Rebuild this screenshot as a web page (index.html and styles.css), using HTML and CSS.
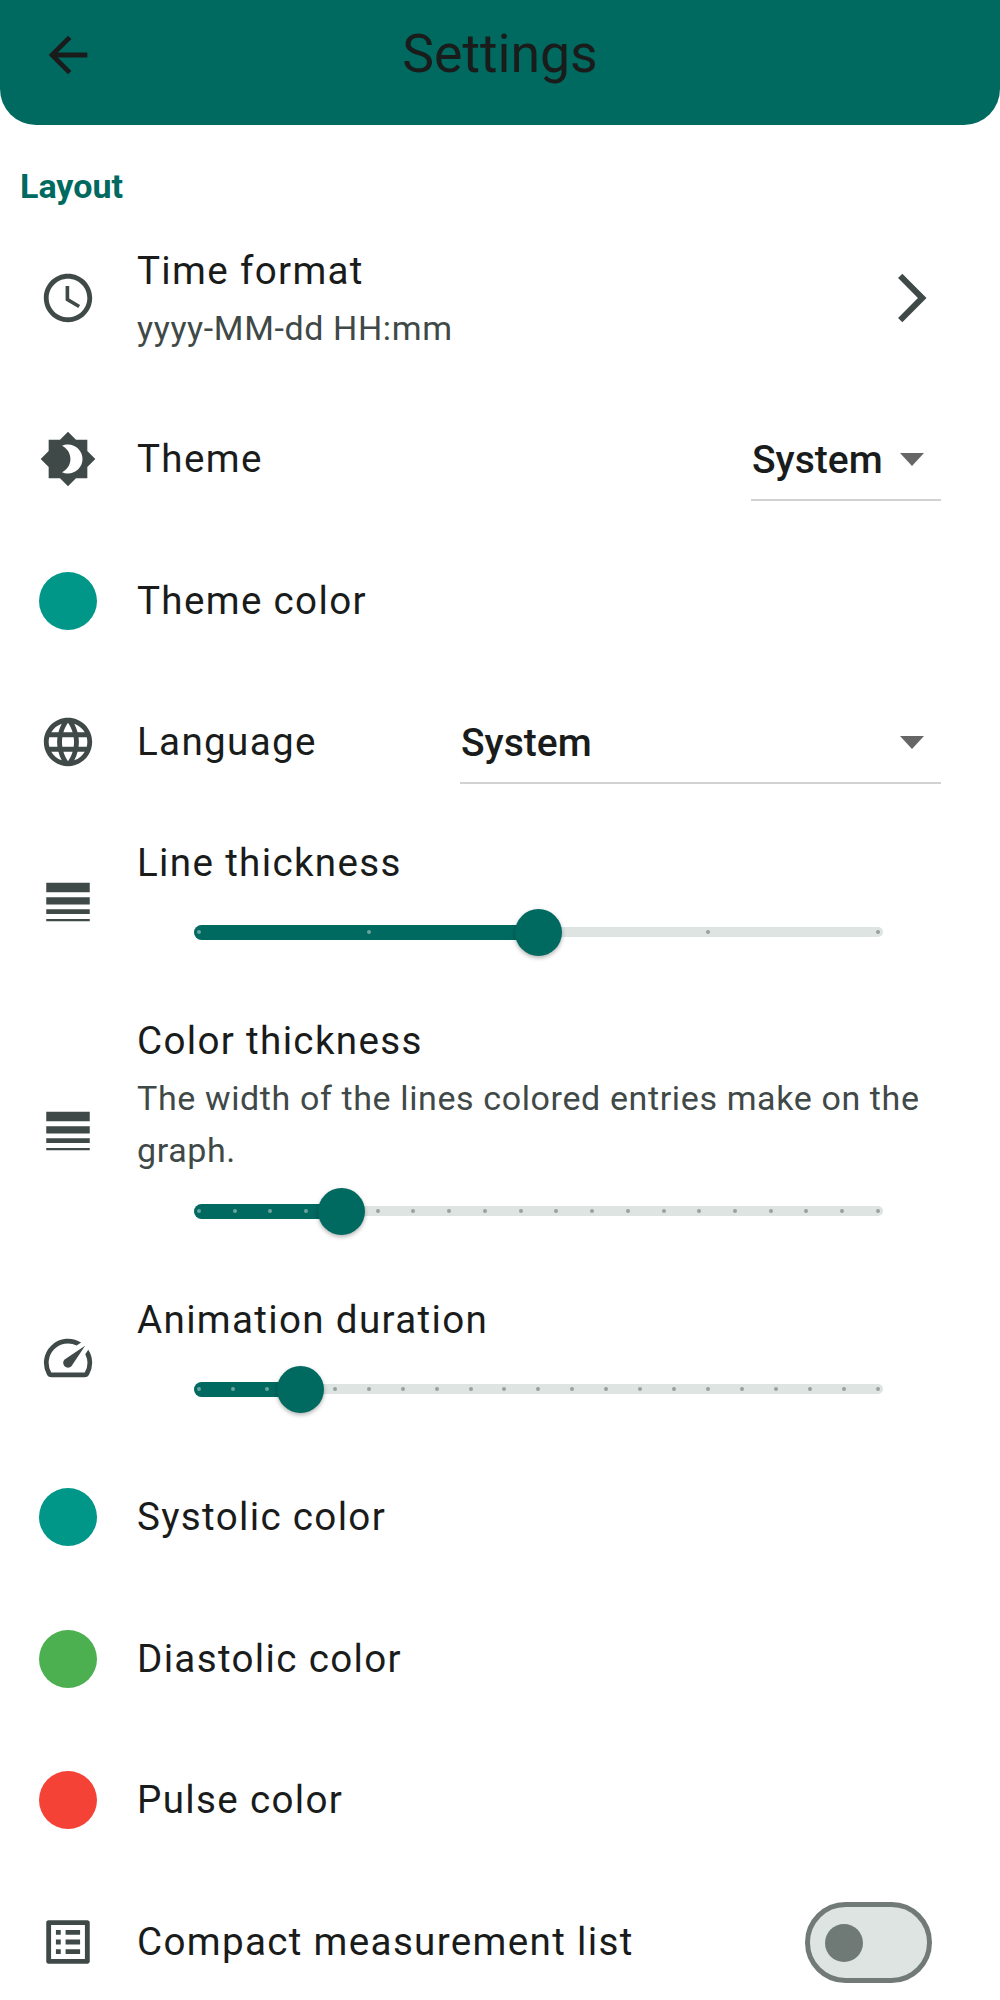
FILE: index.html
```html
<!DOCTYPE html>
<html lang="en">

<head>
    <meta charset="utf-8">
    <meta name="viewport" content="width=device-width, initial-scale=1.0">
    <title>Settings</title>
    <link rel="stylesheet" href="styles.css">
</head>

<body>

    <header class="appbar">
        <svg class="icon back" viewBox="0 0 24 24"><path d="M20 11H7.83l5.59-5.59L12 4l-8 8 8 8 1.41-1.41L7.83 13H20v-2z"/></svg>
        <h1>Settings</h1>
    </header>

    <h2 class="section">Layout</h2>

    <section class="row row-time">
        <svg class="icon" viewBox="0 0 24 24"><path d="M11.99 2C6.47 2 2 6.48 2 12s4.47 10 9.99 10C17.52 22 22 17.52 22 12S17.52 2 11.99 2zM12 20c-4.42 0-8-3.58-8-8s3.58-8 8-8 8 3.58 8 8-3.58 8-8 8z"/><path d="M12.5 7H11v6l5.25 3.15.75-1.23-4.5-2.67z"/></svg>
        <div class="body">
            <p class="title">Time format</p>
            <p class="sub">yyyy-MM-dd HH:mm</p>
        </div>
        <svg class="icon chevron" viewBox="0 0 24 24"><path d="M6.23 20.23 8 22l10-10L8 2 6.23 3.77 14.46 12z"/></svg>
    </section>

    <section class="row">
        <svg class="icon" viewBox="0 0 24 24"><path d="M20 8.69V4h-4.69L12 .69 8.69 4H4v4.69L.69 12 4 15.31V20h4.69L12 23.31 15.31 20H20v-4.69L23.31 12 20 8.69zM12 18c-.89 0-1.74-.2-2.5-.55C11.56 16.5 13 14.42 13 12s-1.44-4.5-3.5-5.45C10.26 6.2 11.11 6 12 6c3.31 0 6 2.69 6 6s-2.69 6-6 6z"/></svg>
        <p class="title">Theme</p>
        <div class="dropdown dropdown-small">
            <span>System</span>
            <svg class="caret" viewBox="0 0 24 14"><path d="M0 0h24L12 13z"/></svg>
        </div>
    </section>

    <section class="row">
        <span class="swatch teal"></span>
        <p class="title">Theme color</p>
    </section>

    <section class="row">
        <svg class="icon" viewBox="0 0 24 24"><path d="M11.99 2C6.47 2 2 6.48 2 12s4.47 10 9.99 10C17.52 22 22 17.52 22 12S17.52 2 11.99 2zm6.93 6h-2.95c-.32-1.25-.78-2.45-1.38-3.56 1.84.63 3.37 1.91 4.33 3.56zM12 4.04c.83 1.2 1.48 2.53 1.91 3.96h-3.82c.43-1.43 1.08-2.76 1.91-3.96zM4.26 14C4.1 13.36 4 12.69 4 12s.1-1.36.26-2h3.38c-.08.66-.14 1.32-.14 2 0 .68.06 1.34.14 2H4.26zm.82 2h2.95c.32 1.25.78 2.45 1.38 3.56-1.84-.63-3.37-1.9-4.33-3.56zm2.95-8H5.08c.96-1.66 2.49-2.93 4.33-3.56C8.81 5.55 8.35 6.75 8.03 8zM12 19.96c-.83-1.2-1.48-2.53-1.91-3.96h3.82c-.43 1.43-1.08 2.76-1.91 3.96zM14.34 14H9.66c-.09-.66-.16-1.32-.16-2 0-.68.07-1.35.16-2h4.68c.09.65.16 1.32.16 2 0 .68-.07 1.34-.16 2zm.25 5.56c.6-1.11 1.06-2.31 1.38-3.56h2.95c-.96 1.65-2.49 2.93-4.33 3.56zM16.36 14c.08-.66.14-1.32.14-2 0-.68-.06-1.34-.14-2h3.38c.16.64.26 1.31.26 2s-.1 1.36-.26 2h-3.38z"/></svg>
        <p class="title">Language</p>
        <div class="dropdown dropdown-wide">
            <span>System</span>
            <svg class="caret" viewBox="0 0 24 14"><path d="M0 0h24L12 13z"/></svg>
        </div>
    </section>

    <section class="row row-slider">
        <svg class="icon" viewBox="0 0 24 24"><path d="M3 17h18v-2H3v2zm0 3h18v-1H3v1zm0-7h18v-3H3v3zm0-9v4h18V4H3z"/></svg>
        <div class="body">
            <p class="title">Line thickness</p>
            <div class="slider">
                <div class="track"></div>
                <div class="rail">
                    <div class="fill" style="width: 50%"></div>
                    <div class="ticks">
                        <i class="on"></i><i class="on"></i><i></i><i></i><i></i>
                    </div>
                    <div class="thumb" style="left: 50%"></div>
                </div>
            </div>
        </div>
    </section>

    <section class="row row-slider">
        <svg class="icon" viewBox="0 0 24 24"><path d="M3 17h18v-2H3v2zm0 3h18v-1H3v1zm0-7h18v-3H3v3zm0-9v4h18V4H3z"/></svg>
        <div class="body">
            <p class="title">Color thickness</p>
            <p class="sub">The width of the lines colored entries make on the graph.</p>
            <div class="slider slider-close">
                <div class="track"></div>
                <div class="rail">
                    <div class="fill" style="width: 21.05%"></div>
                    <div class="ticks">
                        <i class="on"></i><i class="on"></i><i class="on"></i><i class="on"></i><i></i><i></i><i></i><i></i><i></i><i></i><i></i><i></i><i></i><i></i><i></i><i></i><i></i><i></i><i></i><i></i>
                    </div>
                    <div class="thumb" style="left: 21.05%"></div>
                </div>
            </div>
        </div>
    </section>

    <section class="row row-slider">
        <svg class="icon" viewBox="0 0 24 24"><path d="M20.38 8.57l-1.23 1.85a8 8 0 0 1-.22 7.58H5.07A8 8 0 0 1 15.58 6.85l1.85-1.23A10 10 0 0 0 3.35 19a2 2 0 0 0 1.72 1h13.85a2 2 0 0 0 1.74-1 10 10 0 0 0-.27-10.44z"/><path d="M10.59 15.41a2 2 0 0 0 2.83 0l5.66-8.49-8.49 5.66a2 2 0 0 0 0 2.83z"/></svg>
        <div class="body">
            <p class="title">Animation duration</p>
            <div class="slider slider-short">
                <div class="track"></div>
                <div class="rail">
                    <div class="fill" style="width: 15%"></div>
                    <div class="ticks">
                        <i class="on"></i><i class="on"></i><i class="on"></i><i></i><i></i><i></i><i></i><i></i><i></i><i></i><i></i><i></i><i></i><i></i><i></i><i></i><i></i><i></i><i></i><i></i><i></i>
                    </div>
                    <div class="thumb" style="left: 15%"></div>
                </div>
            </div>
        </div>
    </section>

    <section class="row">
        <span class="swatch teal"></span>
        <p class="title">Systolic color</p>
    </section>

    <section class="row">
        <span class="swatch green"></span>
        <p class="title">Diastolic color</p>
    </section>

    <section class="row">
        <span class="swatch red"></span>
        <p class="title">Pulse color</p>
    </section>

    <section class="row">
        <svg class="icon" viewBox="0 0 24 24"><path d="M19 5v14H5V5h14m1.1-2H3.9c-.5 0-.9.4-.9.9v16.2c0 .4.4.9.9.9h16.2c.4 0 .9-.5.9-.9V3.9c0-.5-.5-.9-.9-.9zM11 7h6v2h-6V7zm0 4h6v2h-6v-2zm0 4h6v2h-6zM7 7h2v2H7zm0 4h2v2H7zm0 4h2v2H7z"/></svg>
        <p class="title">Compact measurement list</p>
        <div class="switch"><span></span></div>
    </section>

</body>

</html>
```

FILE: styles.css
```css
html {
    height: 2000px;
    overflow: hidden;
}

body {
    margin: 0;
    background-color: #fff;
    color: #191c1b;
    font-family: Roboto, sans-serif;
}

p,
h1,
h2 {
    margin: 0;
}

.appbar {
    display: flex;
    align-items: center;
    height: 125px;
    padding-left: 39px;
    background-color: #006a60;
    border-radius: 0 0 36px 36px;
}

.appbar .icon {
    margin-bottom: 16px;
}

.appbar h1 {
    flex: 1;
    margin-right: 97px;
    padding-bottom: 17px;
    font-size: 53.5px;
    font-weight: 400;
    line-height: 60px;
    text-align: center;
    color: #191c1b;
}

.icon {
    display: block;
    flex: none;
    width: 58px;
    height: 58px;
    fill: #3f4947;
}

.back {
    fill: #191c1b;
}

.section {
    padding: 40px 0 0 20px;
    height: 43px;
    font-size: 34px;
    font-weight: 700;
    line-height: 43px;
    color: #006a60;
}

.row {
    display: flex;
    align-items: center;
    box-sizing: border-box;
    min-height: 141.7px;
    padding: 0 59px 0 39px;
}

.row > .icon,
.row > .swatch {
    margin-right: 40px;
}

.row-time {
    padding-top: 34.5px;
    padding-bottom: 34.5px;
}

.row-slider {
    padding-top: 22px;
    padding-bottom: 22px;
}

.body {
    flex: 1;
    min-width: 0;
}

.title {
    font-size: 38.6px;
    line-height: 56px;
    letter-spacing: 1.33px;
}

.sub {
    margin-top: 3px;
    font-size: 34px;
    line-height: 52px;
    letter-spacing: 0.62px;
    color: #3f4947;
}

.row > .chevron {
    margin: 0 0 0 auto;
}

.swatch {
    flex: none;
    width: 58px;
    height: 58px;
    border-radius: 50%;
}

.teal {
    background-color: #009688;
}

.green {
    background-color: #4caf50;
}

.red {
    background-color: #f44336;
}

.dropdown {
    display: flex;
    align-items: center;
    justify-content: space-between;
    box-sizing: border-box;
    margin-top: 10px;
    margin-left: auto;
    height: 74px;
    padding: 0 17px 6px 1px;
    border-bottom: 2px solid #d2d2d2;
    font-size: 39px;
    font-weight: 500;
}

.dropdown-small {
    width: 190px;
}

.dropdown-wide {
    width: 481px;
}

.caret {
    width: 24px;
    height: 14px;
    fill: #666;
}

.slider {
    position: relative;
    height: 60px;
    margin: 11px 58px 7px 57px;
}

.slider-close {
    margin-top: 5px;
}

.slider-short {
    margin-bottom: 5px;
}

.track {
    position: absolute;
    top: 25px;
    left: 0;
    right: 0;
    height: 10px;
    border-radius: 5px;
    background-color: #dde4e1;
}

/* ticks stop 5px short of the track ends, values are measured on this inner rail */
.rail {
    position: absolute;
    top: 0;
    bottom: 0;
    left: 5px;
    right: 5px;
}

.fill {
    position: absolute;
    top: 22.5px;
    left: -5px;
    height: 15px;
    padding-left: 5px;
    border-radius: 8px;
    background-color: #006a60;
}

.ticks {
    position: absolute;
    top: 28px;
    left: -2px;
    right: -2px;
    display: flex;
    justify-content: space-between;
}

.ticks i {
    width: 4px;
    height: 4px;
    border-radius: 50%;
    background-color: #98a3a0;
}

.ticks i.on {
    background-color: #6aa59d;
}

.thumb {
    position: absolute;
    top: 6.5px;
    width: 47px;
    height: 47px;
    margin-left: -23.5px;
    border-radius: 50%;
    background-color: #006a60;
    box-shadow: 0 2px 4px rgba(0, 0, 0, .3);
}

.switch {
    display: flex;
    align-items: center;
    box-sizing: border-box;
    flex: none;
    margin-top: 2px;
    margin-left: auto;
    margin-right: 9px;
    width: 127px;
    height: 81px;
    padding-left: 15px;
    border: 5px solid #727a78;
    border-radius: 41px;
    background-color: #dde4e1;
}

.switch span {
    width: 38px;
    height: 38px;
    border-radius: 50%;
    background-color: #6f7976;
}
```
